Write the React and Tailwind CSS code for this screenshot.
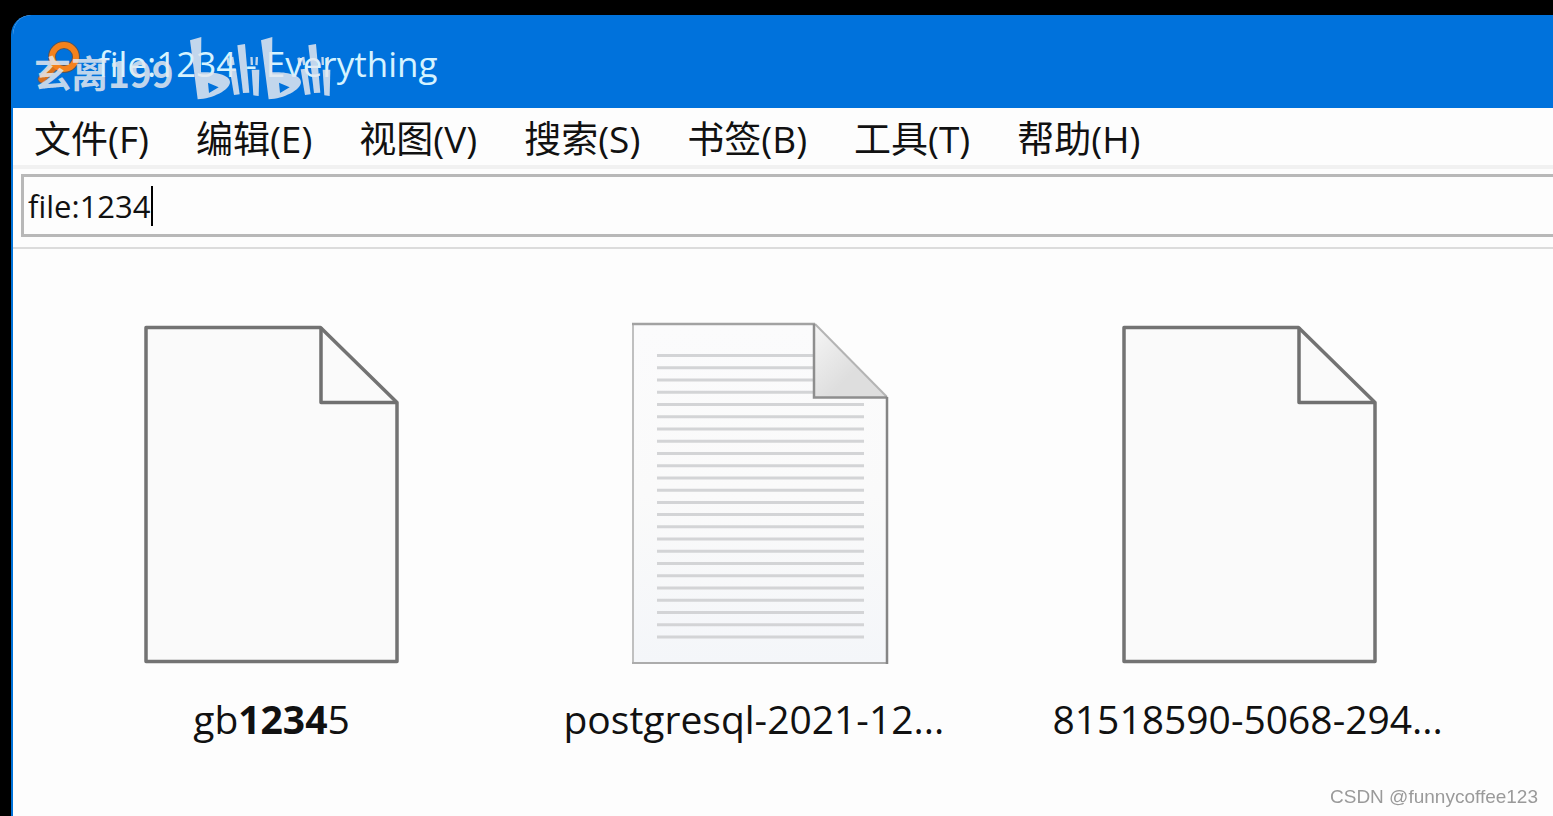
import React, { useState } from "react";

const menus = [
  "文件(F)",
  "编辑(E)",
  "视图(V)",
  "搜索(S)",
  "书签(B)",
  "工具(T)",
  "帮助(H)",
];

const files = [
  { id: 1, type: "blank", name: "gb12345", match: "1234" },
  { id: 2, type: "text", name: "postgresql-2021-12..." },
  { id: 3, type: "blank", name: "81518590-5068-294..." },
];

const AppIcon = () => (
  <svg viewBox="0 0 48 48" className="size-12 shrink-0" fill="none">
    <path d="M20 25L6 39" stroke="#4a5f7c" strokeWidth="9" strokeLinecap="round" />
    <circle cx="28" cy="17" r="12" stroke="#4f5560" strokeWidth="8" />
    <path d="M20 25L6 39" stroke="#d9701c" strokeWidth="7" strokeLinecap="round" />
    <circle cx="28" cy="17" r="12" stroke="#f5821c" strokeWidth="6" />
  </svg>
);

const BiliHalf = () => (
  <>
    <path
      fillRule="evenodd"
      d="M30 43L64 33L63 139C104 136 150 146 150 168C150 192 98 218 53 220ZM84 170L87 201L116 184Z"
    />
    <path d="M149 130L168 128L179 205L162 207Z" />
    <path d="M172 58L195 54L208 200L189 201Z" />
    <path d="M215 131L238 131L236 210L220 208Z" />
    <path d="M152 94L160 92L164 116L156 118Z" />
    <path d="M139 96L146 94L151 118L143 120Z" />
    <path d="M211 93L218 93L219 117L212 117Z" />
    <path d="M227 93L234 93L233 118L226 117Z" />
  </>
);

const BiliLogo = () => (
  <svg viewBox="30 30 423 192" className="h-16 w-[141px]" fill="currentColor">
    <BiliHalf />
    <g transform="translate(213 0)">
      <BiliHalf />
    </g>
  </svg>
);

const BlankFile = () => (
  <svg viewBox="0 0 260 344" className="h-[344px] w-[260px]">
    <path
      d="M4 6.500H178.500L255 81.500V340.500H4Z"
      fill="#fafafa"
      stroke="#737373"
      strokeWidth="3.500"
      strokeLinejoin="round"
    />
    <path
      d="M179 6.500V81.500H255"
      fill="none"
      stroke="#707070"
      strokeWidth="3.500"
      strokeLinejoin="round"
    />
  </svg>
);

const TextFile = () => (
  <svg viewBox="0 0 260 344" className="h-[344px] w-[260px]">
    <defs>
      <linearGradient id="page" x1="0" y1="0" x2="0" y2="1">
        <stop offset="0" stopColor="#fbfbfc" />
        <stop offset="0.5" stopColor="#fafafa" />
        <stop offset="1" stopColor="#f4f6f9" />
      </linearGradient>
      <linearGradient id="fold" x1="0" y1="0" x2="1" y2="1">
        <stop offset="0" stopColor="#f6f6f6" />
        <stop offset="0.6" stopColor="#dedede" />
      </linearGradient>
    </defs>
    <path d="M2 3H184L256 76V342H2Z" fill="url(#page)" />
    {Array.from({ length: 24 }, (_, i) => (
      <path
        key={i}
        d={`M26 ${34.5 + i * 12.24}H${i < 4 ? 183 : 233}`}
        stroke="#d3d4d6"
        strokeWidth="3"
      />
    ))}
    <path d="M183 3V76H256Z" fill="url(#fold)" />
    <path d="M2 342V3" stroke="#c0c0c0" strokeWidth="2" />
    <path d="M1 3H184" stroke="#a2a2a2" strokeWidth="2.500" />
    <path d="M184 3L256 76" stroke="#b4b4b4" strokeWidth="2" />
    <path d="M183 3V76.500H256" fill="none" stroke="#8e8e8e" strokeWidth="2.500" />
    <path d="M1 342H256" stroke="#acacac" strokeWidth="2" />
    <path d="M256 76V343" stroke="#858585" strokeWidth="2.500" />
  </svg>
);

const FileName = ({ name, match }) => {
  if (!match) return name;
  const [before, after] = name.split(match);
  return (
    <>
      {before}
      <b>{match}</b>
      {after}
    </>
  );
};

const App = () => {
  const [query, setQuery] = useState("file:1234");

  return (
    <div className="min-h-screen flex bg-black pt-[15px] pl-[11px] overflow-hidden font-['Open_Sans','Noto_Sans_CJK_SC',sans-serif] text-[#111]">
      <div className="flex-1 min-w-0 flex flex-col rounded-tl-[20px] overflow-hidden border-l-2 border-[#0072d8] bg-[#fdfdfd]">
        <header className="relative h-[93px] flex items-center gap-[14px] pt-1 pl-[23px] bg-[#0072dc] text-[#d5f3ff]">
          <AppIcon />
          <h1 className="text-[35px] leading-[48px] whitespace-nowrap">
            file:1234 - Everything
          </h1>
          <div className="absolute left-[21px] top-[21px] flex items-end gap-4 text-[#e4e8ee]/85">
            <span className="font-['Noto_Sans_CJK_SC',sans-serif] font-bold text-[37px] leading-[56px] whitespace-nowrap">
              玄离199
            </span>
            <BiliLogo />
          </div>
        </header>

        <nav className="h-[61px] flex items-center gap-[47px] pt-1 pl-[21px] border-b-4 border-[#f1f1f1]">
          {menus.map((item) => (
            <button key={item} className="text-[37px] leading-[52px] whitespace-nowrap">
              {item}
            </button>
          ))}
        </nav>

        <div className="pt-[5px] pb-[10px] pl-2 border-b-2 border-[#dcdcdc]">
          <label className="h-[63px] flex items-center pl-1 border-[3px] border-r-0 border-[#b8b8b8] cursor-text">
            <input
              type="text"
              aria-label="搜索"
              value={query}
              onChange={(e) => setQuery(e.target.value)}
              className="[field-sizing:content] text-[31px] leading-10 outline-none caret-transparent"
            />
            <span className="w-[2px] h-10 bg-black" />
          </label>
        </div>

        <main className="flex-1 pt-[72px] pl-[14px]">
          <ul className="grid grid-cols-[repeat(auto-fill,489px)]">
            {files.map((file) => (
              <li key={file.id} className="flex flex-col items-center">
                {file.type === "text" ? <TextFile /> : <BlankFile />}
                <p
                  className={`mt-7 w-[394px] text-[39px] leading-[52px] whitespace-nowrap ${
                    file.name.endsWith("...") ? "text-left" : "text-center"
                  }`}
                >
                  <FileName name={file.name} match={file.match} />
                </p>
              </li>
            ))}
          </ul>
        </main>
      </div>
      <p className="fixed right-[15px] bottom-[7px] font-['Liberation_Sans',sans-serif] text-[19px] leading-6 text-[#9a9a9a]">
        CSDN @funnycoffee123
      </p>
    </div>
  );
};

export default App;
